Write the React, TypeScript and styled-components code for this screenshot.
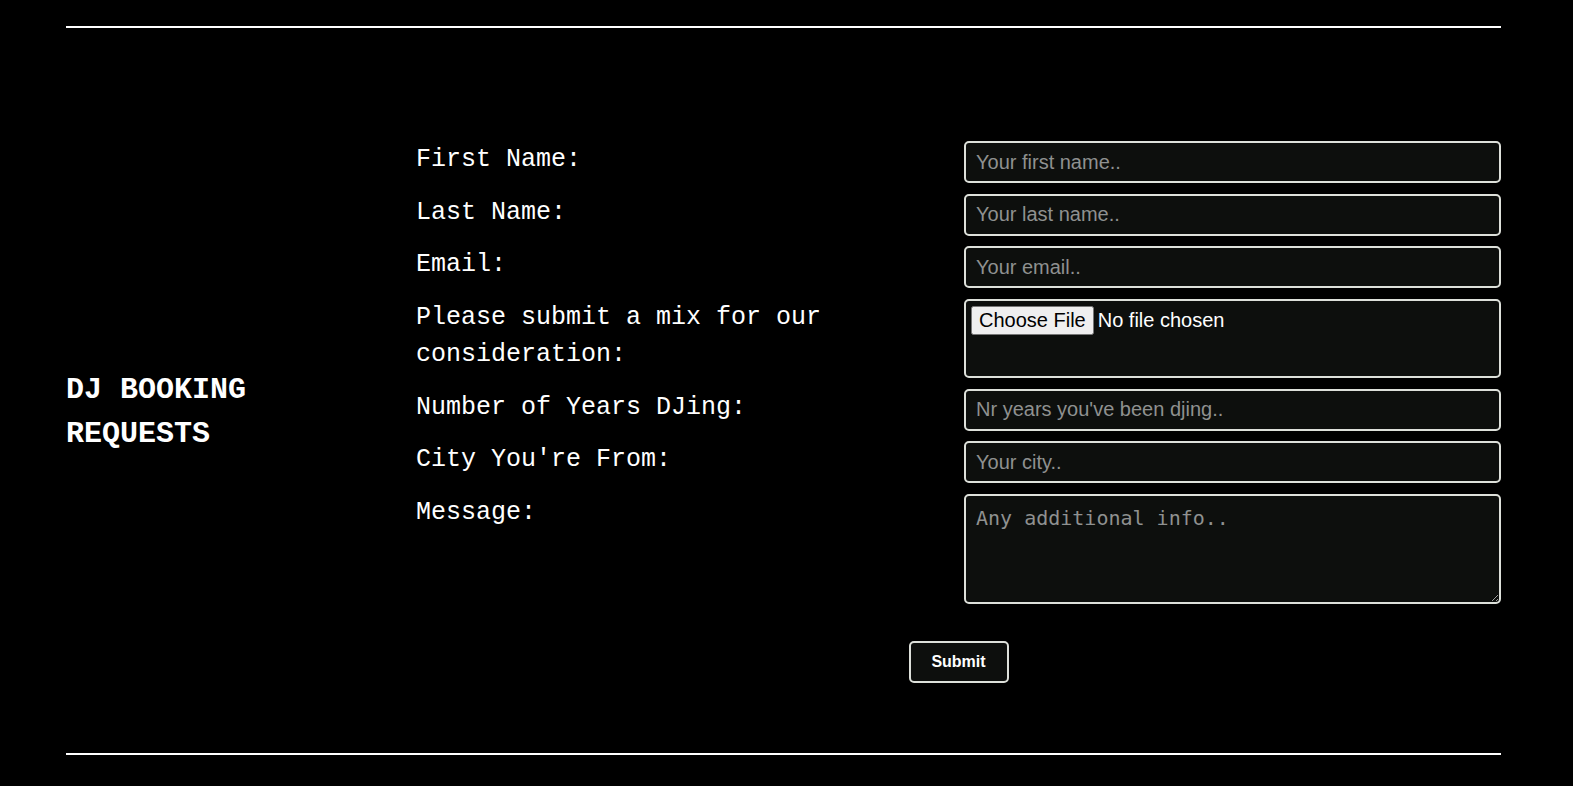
import React from "react";
import styled, { createGlobalStyle } from "styled-components";

const GlobalStyle = createGlobalStyle`
  html, body {
    margin: 0;
    padding: 0;
    background: #000;
  }
  body {
    font-family: "Liberation Mono", "Courier New", monospace;
    color: #fff;
  }
  * { box-sizing: border-box; }
`;

const Page = styled.div`
  padding: 26px 72px 30px 66px;
  background: #000;
`;

const Rule = styled.hr`
  margin: 0;
  border: none;
  height: 2px;
  background: #fff;
`;

const Section = styled.section`
  display: flex;
  align-items: center;
  padding: 113px 0 70.5px;
`;

const HeadingCol = styled.div`
  width: 350px;
  flex: none;
`;

const Heading = styled.h1`
  margin: 0;
  font-family: "Liberation Mono", "Courier New", monospace;
  font-weight: 700;
  font-size: 30px;
  line-height: 44px;
  color: #fff;
  width: 300px;
`;

const FormCol = styled.form`
  flex: 1;
  display: flex;
  flex-direction: column;
  align-items: center;
`;

const Fields = styled.div`
  width: 100%;
  display: grid;
  grid-template-columns: 548px 1fr;
  row-gap: 10.5px;
  align-items: start;
`;

const Label = styled.label`
  font-family: "Liberation Mono", "Courier New", monospace;
  font-size: 25px;
  line-height: 37.5px;
  color: #fff;
  margin-top: 0;
  padding-right: 40px;
`;

const fieldBase = `
  width: 100%;
  background: #0d0f0d;
  border: 2px solid #dde0da;
  border-radius: 5px;
  color: #fff;
  outline: none;
`;

const TextInput = styled.input`
  ${fieldBase}
  height: 42px;
  padding: 0 10px;
  font-family: "Liberation Sans", Arial, sans-serif;
  font-size: 20px;
  &::placeholder {
    color: #8f9190;
  }
`;

const FileInput = styled.input`
  ${fieldBase}
  height: 79.5px;
  padding: 5px 5px 3px;
  font-family: "Liberation Sans", Arial, sans-serif;
  font-size: 20px;
`;

const TextArea = styled.textarea`
  ${fieldBase}
  display: block;
  height: 110px;
  padding: 10px 10px;
  font-family: "DejaVu Sans Mono", monospace;
  font-size: 20px;
  &::placeholder {
    color: #8f9190;
  }
`;

const SubmitButton = styled.button`
  margin-top: 37px;
  width: 100px;
  height: 42px;
  background: #0d0f0d;
  color: #fff;
  border: 2px solid #dde0da;
  border-radius: 5px;
  font-family: "Liberation Sans", Arial, sans-serif;
  font-weight: 700;
  font-size: 16px;
  cursor: pointer;
`;

type Field = {
  id: string;
  label: string;
  kind: "text" | "file" | "area";
  placeholder?: string;
};

const fields: Field[] = [
  { id: "fname", label: "First Name:", kind: "text", placeholder: "Your first name.." },
  { id: "lname", label: "Last Name:", kind: "text", placeholder: "Your last name.." },
  { id: "email", label: "Email:", kind: "text", placeholder: "Your email.." },
  { id: "mix", label: "Please submit a mix for our consideration:", kind: "file" },
  { id: "years", label: "Number of Years DJing:", kind: "text", placeholder: "Nr years you've been djing.." },
  { id: "city", label: "City You're From:", kind: "text", placeholder: "Your city.." },
  { id: "message", label: "Message:", kind: "area", placeholder: "Any additional info.." },
];

export default function App() {
  return (
    <>
      <GlobalStyle />
      <Page>
        <Rule />
        <Section>
          <HeadingCol>
            <Heading>DJ BOOKING REQUESTS</Heading>
          </HeadingCol>
          <FormCol onSubmit={(e) => e.preventDefault()}>
            <Fields>
              {fields.map((f) => (
                <React.Fragment key={f.id}>
                  <Label htmlFor={f.id}>{f.label}</Label>
                  {f.kind === "text" && (
                    <TextInput id={f.id} type="text" placeholder={f.placeholder} />
                  )}
                  {f.kind === "file" && <FileInput id={f.id} type="file" />}
                  {f.kind === "area" && (
                    <TextArea id={f.id} placeholder={f.placeholder} />
                  )}
                </React.Fragment>
              ))}
            </Fields>
            <SubmitButton type="submit">Submit</SubmitButton>
          </FormCol>
        </Section>
        <Rule />
      </Page>
    </>
  );
}
